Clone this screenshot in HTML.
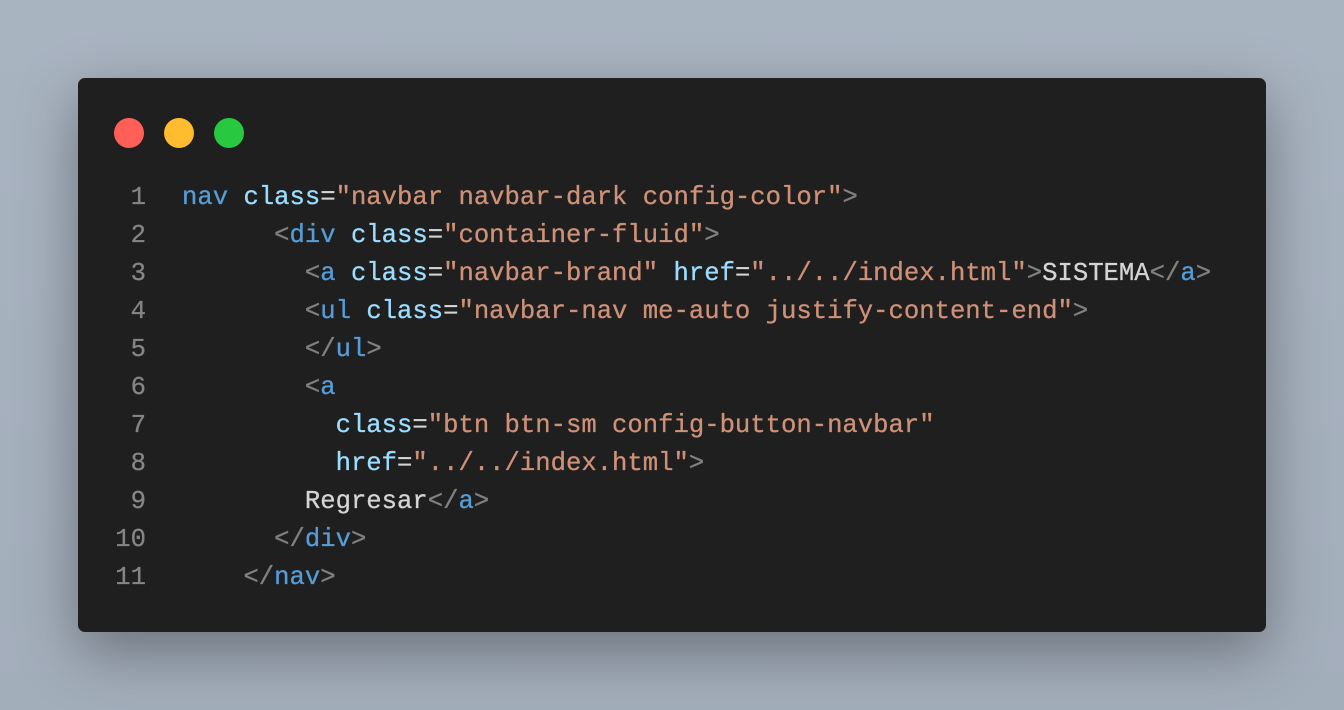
<!DOCTYPE html>
<html><head><style>
html,body{margin:0;padding:0;width:1344px;height:710px;overflow:hidden}
body{background:linear-gradient(180deg,#a9b4c1 0%,#a3aebb 100%);position:relative}
.card{position:absolute;left:78px;top:78px;width:1188px;height:554px;background:#1f1f1f;border-radius:7px;box-shadow:0 20px 60px rgba(0,0,0,0.35)}
.dot{position:absolute;top:118px;width:30px;height:30px;border-radius:50%}
.code{position:absolute;left:0;top:179px;font-family:"Liberation Mono",monospace;font-size:25.6px;line-height:38px;white-space:pre;color:#d4d4d4;-webkit-text-stroke:0.3px currentColor}
.ln{display:inline-block;width:146px;text-align:right;color:#858585;margin-right:36px}
.t{color:#569cd6}.a{color:#9cdcfe}.s{color:#ce9178}.p{color:#808080}
</style></head><body>
<div class="card"></div>
<div class="dot" style="left:114px;background:#ff5f57"></div>
<div class="dot" style="left:164px;background:#febc2e"></div>
<div class="dot" style="left:214px;background:#28c840"></div>
<div class="code"><div><span class="ln">1</span><span class="t">nav</span> <span class="a">class</span>=<span class="s">"navbar navbar-dark config-color"</span><span class="p">&gt;</span></div><div><span class="ln">2</span>      <span class="p">&lt;</span><span class="t">div</span> <span class="a">class</span>=<span class="s">"container-fluid"</span><span class="p">&gt;</span></div><div><span class="ln">3</span>        <span class="p">&lt;</span><span class="t">a</span> <span class="a">class</span>=<span class="s">"navbar-brand"</span> <span class="a">href</span>=<span class="s">"../../index.html"</span><span class="p">&gt;</span>SISTEMA<span class="p">&lt;/</span><span class="t">a</span><span class="p">&gt;</span></div><div><span class="ln">4</span>        <span class="p">&lt;</span><span class="t">ul</span> <span class="a">class</span>=<span class="s">"navbar-nav me-auto justify-content-end"</span><span class="p">&gt;</span></div><div><span class="ln">5</span>        <span class="p">&lt;/</span><span class="t">ul</span><span class="p">&gt;</span></div><div><span class="ln">6</span>        <span class="p">&lt;</span><span class="t">a</span></div><div><span class="ln">7</span>          <span class="a">class</span>=<span class="s">"btn btn-sm config-button-navbar"</span></div><div><span class="ln">8</span>          <span class="a">href</span>=<span class="s">"../../index.html"</span><span class="p">&gt;</span></div><div><span class="ln">9</span>        Regresar<span class="p">&lt;/</span><span class="t">a</span><span class="p">&gt;</span></div><div><span class="ln">10</span>      <span class="p">&lt;/</span><span class="t">div</span><span class="p">&gt;</span></div><div><span class="ln">11</span>    <span class="p">&lt;/</span><span class="t">nav</span><span class="p">&gt;</span></div></div>
</body></html>
